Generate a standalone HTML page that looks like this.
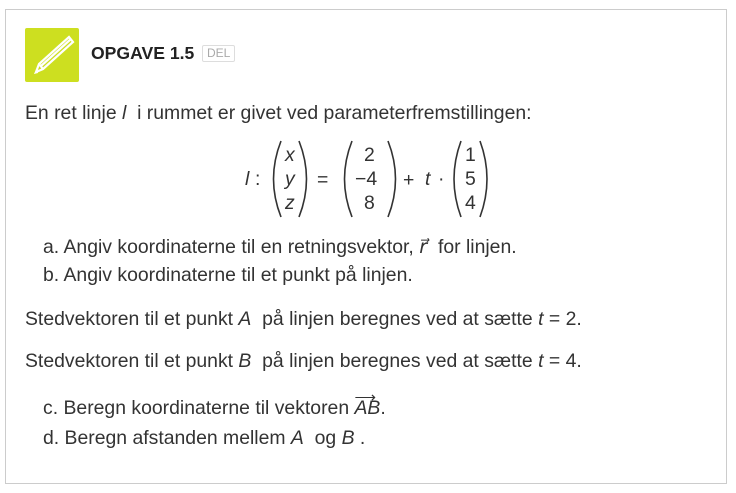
<!DOCTYPE html>
<html><head><meta charset="utf-8"><style>
body{margin:0;width:736px;height:493px;background:#fff;font-family:"Liberation Sans",sans-serif;color:#333;position:relative;overflow:hidden}
.box{position:absolute;left:5px;top:9px;width:720px;height:473px;border:1px solid #ccc}
.l{position:absolute;font-size:19.4px;line-height:20px;white-space:nowrap}
i{font-style:italic}
.icon{position:absolute;left:25px;top:28px;width:54px;height:54px;background:#cddf20;border-radius:2px}
.title{position:absolute;left:91px;top:43px;font-size:17.6px;font-weight:bold;color:#222}
.del{position:absolute;left:202px;top:45px;font-size:12px;color:#aaa;border:1px solid #ddd;border-radius:2px;padding:1px 4px;line-height:13px}
svg text{font-family:"Liberation Sans",sans-serif;font-size:19.4px;fill:#333}
</style></head><body>
<div class="box"></div>
<div class="icon"><svg width="54" height="54" viewBox="0 0 54 54"><g fill="none" stroke="#fff" stroke-width="2.2"><path d="M11 44 L14 36 L44 9 L48 14 L18 41 Z"/><path d="M14 36 L18 41"/><path d="M16 38 L46 11"/></g><path d="M9 46 L12 42 L13 45Z" fill="#fff"/></svg></div>
<div class="title">OPGAVE 1.5</div>
<div class="del">DEL</div>
<div class="l" style="left:25px;top:103px">En ret linje <i>l</i> &nbsp;i rummet er givet ved parameterfremstillingen:</div>
<svg style="position:absolute;left:0;top:0" width="736" height="493">
<text x="245" y="185" font-style="italic">l</text><text x="255" y="185">:</text>
<path d="M281 141 Q266 179 281 217" fill="none" stroke="#333" stroke-width="1.6"/>
<path d="M299 141 Q314 179 299 217" fill="none" stroke="#333" stroke-width="1.6"/>
<text x="285" y="161" font-style="italic">x</text><text x="285" y="185" font-style="italic">y</text><text x="285" y="209" font-style="italic">z</text>
<text x="317" y="186">=</text>
<path d="M352 141 Q337 179 352 217" fill="none" stroke="#333" stroke-width="1.6"/>
<path d="M388 141 Q403 179 388 217" fill="none" stroke="#333" stroke-width="1.6"/>
<text x="364" y="161">2</text><text x="355" y="185">−4</text><text x="364" y="209">8</text>
<text x="403" y="186">+</text><text x="425" y="185" font-style="italic">t</text><text x="438" y="185">·</text>
<path d="M461 141 Q447 179 461 217" fill="none" stroke="#333" stroke-width="1.6"/>
<path d="M480 141 Q494 179 480 217" fill="none" stroke="#333" stroke-width="1.6"/>
<text x="465" y="161">1</text><text x="465" y="185">5</text><text x="465" y="209">4</text>
</svg>
<div class="l" style="left:43px;top:237px">a. Angiv koordinaterne til en retningsvektor, <i>r⃗</i> &nbsp;for linjen.</div>
<div class="l" style="left:43px;top:265px">b. Angiv koordinaterne til et punkt på linjen.</div>
<div class="l" style="left:25px;top:309px">Stedvektoren til et punkt <i>A</i> &nbsp;på linjen beregnes ved at sætte <i>t</i> = 2.</div>
<div class="l" style="left:25px;top:351px">Stedvektoren til et punkt <i>B</i> &nbsp;på linjen beregnes ved at sætte <i>t</i> = 4.</div>
<div class="l" style="left:43px;top:398px">c. Beregn koordinaterne til vektoren <i style="position:relative">AB<span style="position:absolute;left:0;top:-9px;font-style:normal;font-size:15px;letter-spacing:-2px">⟶</span></i>.</div>
<div class="l" style="left:43px;top:428px">d. Beregn afstanden mellem <i>A</i> &nbsp;og <i>B</i> .</div>
</body></html>
